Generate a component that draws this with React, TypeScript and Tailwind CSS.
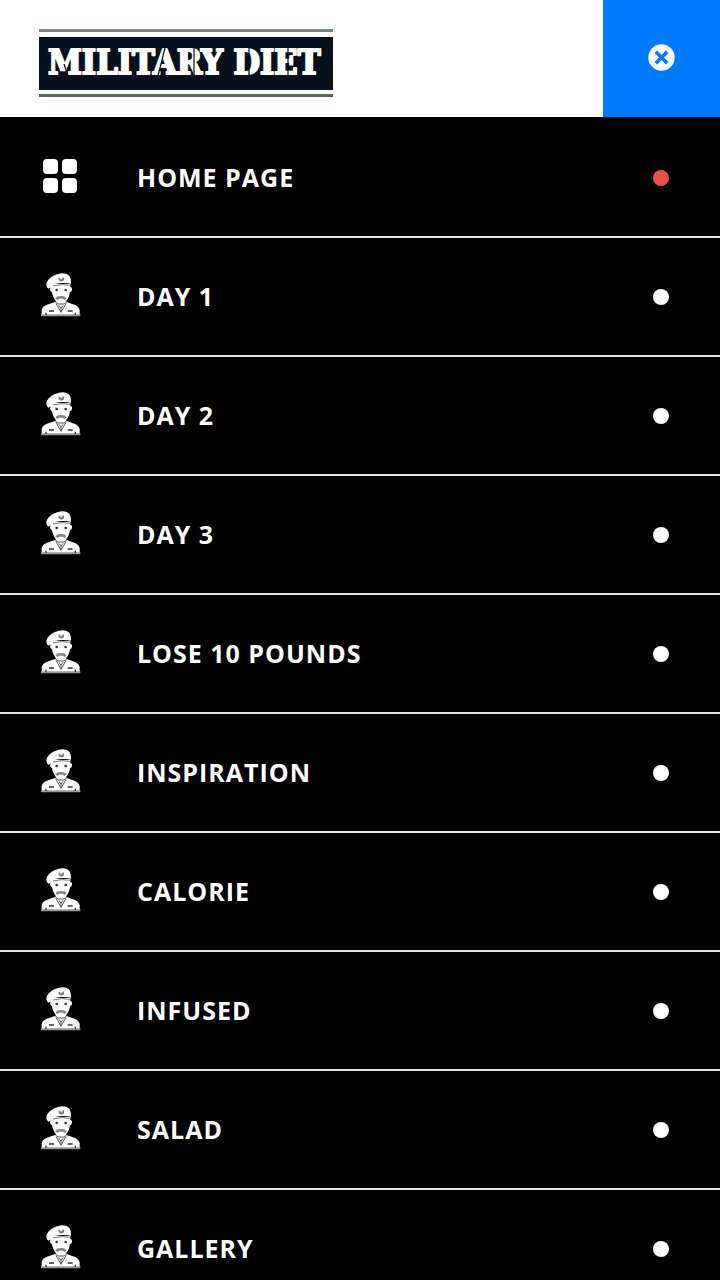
import { useState } from "react";

const items = [
  "Home Page",
  "Day 1",
  "Day 2",
  "Day 3",
  "Lose 10 Pounds",
  "Inspiration",
  "Calorie",
  "Infused",
  "Salad",
  "Gallery",
];

const Logo = () => (
  <svg
    width="294"
    height="70"
    viewBox="0 0 294 70"
    role="img"
    aria-label="Military Diet"
  >
    <rect y="1" width="294" height="3" fill="#718a79" />
    <rect y="9" width="294" height="53" fill="#07101b" />
    <rect y="66" width="294" height="3" fill="#536b58" />
    <text
      x="9"
      y="46"
      fill="#fff"
      stroke="#fff"
      strokeWidth="2"
      strokeLinejoin="round"
      fontSize="34"
      fontWeight="700"
      fontFamily="'DejaVu Serif Condensed', 'DejaVu Serif', serif"
    >
      MILITARY DIET
    </text>
    {/* stencil bridges */}
    <path
      d="M25 36L29 48M126 20L119 48M155 20V48M210 20V48M249 20V48"
      stroke="#07101b"
      strokeWidth="1.2"
      fill="none"
    />
  </svg>
);

const GridIcon = () => (
  <svg width="34" height="34" viewBox="0 0 34 34" fill="#fff" aria-hidden="true">
    <rect width="15" height="15" rx="4" />
    <rect x="19" width="15" height="15" rx="4" />
    <rect y="19" width="15" height="15" rx="4" />
    <rect x="19" y="19" width="15" height="15" rx="4" />
  </svg>
);

const SoldierIcon = () => (
  <svg width="40" height="45" viewBox="0 0 120 135" aria-hidden="true">
    {/* shoulders */}
    <path
      d="M2 130V115Q4 103 18 98L42 90H77L100 98Q114 103 116 115V130Z"
      fill="#fff"
    />
    <path d="M0 127H118V133H0Z" fill="#999" />
    {/* head and ears */}
    <path
      d="M32 36H88V45Q94 45 93 53Q92 59 87 61Q84 79 76 86V94L60 108L44 94V86Q36 78 33 61Q27 58 27 51L30 45Z"
      fill="#fff"
    />
    {/* beret */}
    <path
      d="M22 50Q13 42 18 29Q28 11 54 5Q76 1 86 13Q91 21 90 35Q64 31 42 36Q35 46 22 50Z"
      fill="#fff"
    />
    <path d="M36 42Q60 35 89 40" stroke="#777" strokeWidth="3" fill="none" />
    <path d="M53 16L61 21L69 15V25L61 29L53 25Z" fill="#777" />
    <path d="M58 18H64V22H58Z" fill="#ddd" />
    {/* face */}
    <circle cx="47" cy="54" r="4" fill="#333" />
    <circle cx="74" cy="54" r="4" fill="#333" />
    <path
      d="M43 79Q48 71 60 72Q72 71 77 79L71 84L65 80H55L49 84Z"
      fill="#888"
    />
    {/* collar and pockets */}
    <path
      d="M43 90L51 96H69L77 90M45 94L60 121L75 94M54 100L60 109L66 100M60 109V120"
      stroke="#555"
      strokeWidth="3"
      fill="none"
    />
    <path
      d="M24 117H39M80 117H95M15 122V129M103 122V129"
      stroke="#333"
      strokeWidth="4"
    />
  </svg>
);

const CloseIcon = () => (
  <svg width="27" height="27" viewBox="0 0 27 27" aria-hidden="true">
    <circle cx="13.5" cy="13.5" r="13.2" fill="#fff" />
    <path
      d="M7.8 7.8L19.2 19.2M19.2 7.8L7.8 19.2"
      stroke="#007aff"
      strokeWidth="3.6"
    />
  </svg>
);

const App = () => {
  const [active, setActive] = useState("Home Page");

  return (
    <div className="h-screen overflow-hidden bg-black font-['Open_Sans',sans-serif]">
      <header className="flex justify-between bg-white border-b-2 border-black">
        <a href="#" className="pl-[39px] pt-7">
          <Logo />
        </a>
        <button
          type="button"
          aria-label="Close menu"
          className="w-[117px] h-[117px] pb-0.5 flex justify-center items-center bg-[#007aff]"
        >
          <CloseIcon />
        </button>
      </header>
      <nav>
        <ul>
          {items.map((item, i) => (
            <li key={item} className="border-b-2 border-[#e5e5e5]">
              <a
                href="#"
                onClick={() => setActive(item)}
                className="flex items-center h-[117px] pl-[41px] pr-[51px] text-white"
              >
                <span className="w-24 pb-1 flex">
                  {i === 0 ? (
                    <span className="pl-0.5">
                      <GridIcon />
                    </span>
                  ) : (
                    <SoldierIcon />
                  )}
                </span>
                <span className="grow text-[25px] font-bold uppercase tracking-[1px]">
                  {item}
                </span>
                <span
                  className={`w-4 h-4 rounded-full ${
                    active === item ? "bg-[#e94f46]" : "bg-white"
                  }`}
                ></span>
              </a>
            </li>
          ))}
        </ul>
      </nav>
    </div>
  );
};

export default App;
